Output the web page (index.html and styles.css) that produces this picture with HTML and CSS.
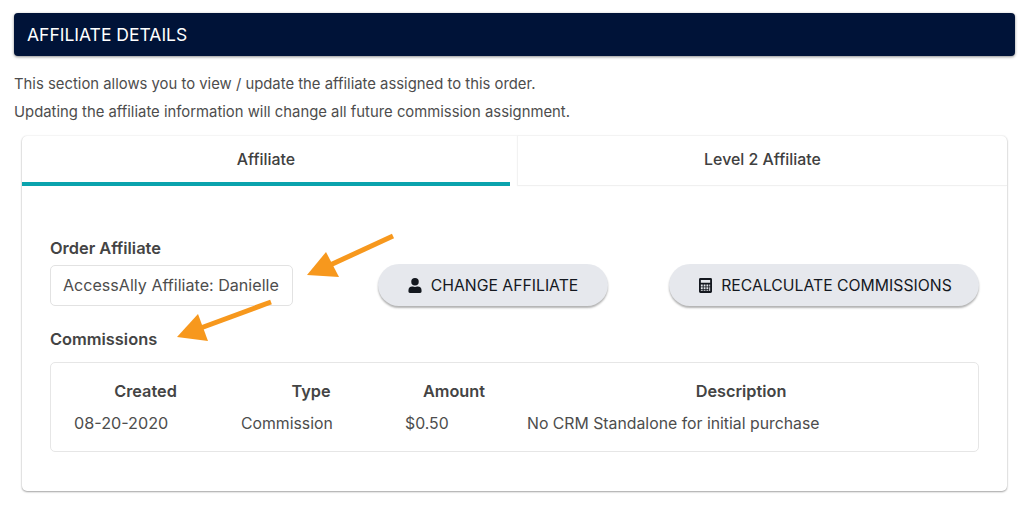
FILE: index.html
```html
<!DOCTYPE html>
<html lang="en">
<head>
<meta charset="utf-8">
<title>Affiliate Details</title>
<link rel="stylesheet" href="styles.css">
</head>
<body>
<header class="banner">AFFILIATE DETAILS</header>
<p class="intro intro-first">This section allows you to view / update the affiliate assigned to this order.</p>
<p class="intro">Updating the affiliate information will change all future commission assignment.</p>
<section class="card">
  <div class="tabs">
    <div class="tab tab-active">Affiliate</div>
    <div class="tab tab-idle">Level 2 Affiliate</div>
  </div>
  <div class="panel">
    <div class="affiliate-row">
      <div class="field">
        <div class="label">Order Affiliate</div>
        <div class="select">AccessAlly Affiliate: Danielle</div>
      </div>
      <button class="btn btn-change">
        <svg class="icon icon-user" viewBox="0 0 448 512"><path d="M224 256a128 128 0 1 0 0-256 128 128 0 0 0 0 256zm89.600 32h-16.700a174 174 0 0 1-145.800 0h-16.700A134.400 134.400 0 0 0 0 422.400V464a48 48 0 0 0 48 48h352a48 48 0 0 0 48-48v-41.600A134.400 134.400 0 0 0 313.600 288z"/></svg>
        CHANGE AFFILIATE
      </button>
      <button class="btn btn-recalc">
        <svg class="icon icon-calc" viewBox="0 0 448 512"><path fill-rule="evenodd" d="M400 0H48A48 48 0 0 0 0 48v416a48 48 0 0 0 48 48h352a48 48 0 0 0 48-48V48a48 48 0 0 0-48-48zM64 64h320v96H64zm0 160h64v64H64zm96 0h64v64h-64zm96 0h64v64h-64zm96 0h32v64h-32zM64 320h64v64H64zm96 0h64v64h-64zm96 0h64v64h-64zm96 0h32v128h-32zM64 416h64v32H64zm96 0h64v32h-64zm96 0h64v32h-64z"/></svg>
        RECALCULATE COMMISSIONS
      </button>
    </div>
    <div class="label label-commissions">Commissions</div>
    <div class="table-box">
      <table class="table">
        <thead>
          <tr><th class="col-created">Created</th><th class="col-type">Type</th><th class="col-amount">Amount</th><th class="col-desc">Description</th></tr>
        </thead>
        <tbody>
          <tr><td class="cell-date">08-20-2020</td><td>Commission</td><td>$0.50</td><td>No CRM Standalone for initial purchase</td></tr>
        </tbody>
      </table>
    </div>
  </div>
</section>
<svg class="arrows" viewBox="0 0 1024 509">
  <path class="arrow-line" d="M393 236 328 266"/>
  <path class="arrow-head" d="M307 275 326 252 339 277Z"/>
  <path class="arrow-line" d="M271 302 198 329"/>
  <path class="arrow-head" d="M177 337 198 314 208 341Z"/>
</svg>
</body>
</html>
```

FILE: styles.css
```css
* { box-sizing: border-box; }
html, body { margin: 0; height: 509px; overflow: hidden; background: #fff; }
body {
  padding: 13px 9px 0 14px;
  font-family: Inter, "Liberation Sans", sans-serif;
  font-size: 14.85px;
  color: #4d4d4d;
  position: relative;
}
.banner {
  height: 43px;
  padding: 0 0 1px 13px;
  display: flex;
  align-items: center;
  background: #001338;
  color: #fff;
  font-size: 17.5px;
  font-weight: 400;
  border-radius: 4px;
  box-shadow: 0 1px 3px rgba(0, 0, 0, .45);
}
.intro { margin: 0; height: 28px; line-height: 28px; }
.intro-first { margin-top: 14px; }
.card {
  margin: 10px 8px 0;
  height: 355px;
  background: #fff;
  border-radius: 5px;
  box-shadow: 0 1px 2px rgba(0, 0, 0, .35), 0 0 2px rgba(0, 0, 0, .1);
}
.tabs { display: flex; gap: 8px; height: 50px; }
.tab {
  display: flex;
  align-items: center;
  justify-content: center;
  font-size: 15.9px;
  font-weight: 500;
  color: #404040;
}
.tab-active { flex: 0 0 488px; border-bottom: 4px solid #0aa3ad; }
.tab-idle { flex: 1; border-bottom: 1px solid #f0f0f0; padding-bottom: 3px; box-shadow: -1px 0 1px rgba(0, 0, 0, .05); }
.panel { padding: 53px 28px 0; }
.affiliate-row { display: flex; align-items: flex-start; }
.label { font-weight: 600; font-size: 16.4px; color: #444; line-height: 18px; }
.select {
  margin-top: 8px;
  width: 243px;
  height: 41px;
  padding: 0 0 1px 12px;
  display: flex;
  align-items: center;
  font-size: 16.1px;
  border: 1px solid #e2e2e2;
  border-radius: 5px;
}
.btn {
  height: 42px;
  margin-top: 25px;
  display: flex;
  align-items: center;
  justify-content: center;
  gap: 9px;
  border: 0;
  border-radius: 21px;
  background: #e6e8ed;
  color: #14181f;
  font: 400 15.75px Inter, "Liberation Sans", sans-serif;
  box-shadow: 0 2px 2px rgba(0, 0, 0, .3);
}
.btn-change { margin-left: 85px; width: 230px; }
.btn-recalc { margin-left: 61px; width: 310px; padding-left: 9px; }
.icon { fill: #14181f; flex: none; }
.icon-user { width: 14px; height: 15px; }
.icon-calc { width: 13px; height: 15px; }
.label-commissions { margin-top: 24px; }
.table-box {
  margin-top: 14px;
  height: 90px;
  padding: 12px 0 0 1px;
  border: 1px solid #e6e6e6;
  border-radius: 5px;
}
.table { border-collapse: collapse; table-layout: fixed; width: 925px; }
.table th, .table td { padding: 0; height: 32px; text-align: left; font-size: 15.8px; }
.table th { font-weight: 600; font-size: 16.3px; color: #444; text-align: center; }
.col-created { width: 189px; padding-right: 2px !important; }
.col-type { width: 164px; padding-right: 24px !important; }
.col-amount { width: 122px; padding-right: 24px !important; }
.col-desc { padding-right: 22px !important; }
.table .cell-date { padding-left: 22px; font-size: 16.2px; }
.arrows { position: absolute; left: 0; top: 0; width: 1024px; height: 509px; pointer-events: none; }
.arrow-line { stroke: #f7981d; stroke-width: 5; fill: none; }
.arrow-head { fill: #f7981d; }
```
